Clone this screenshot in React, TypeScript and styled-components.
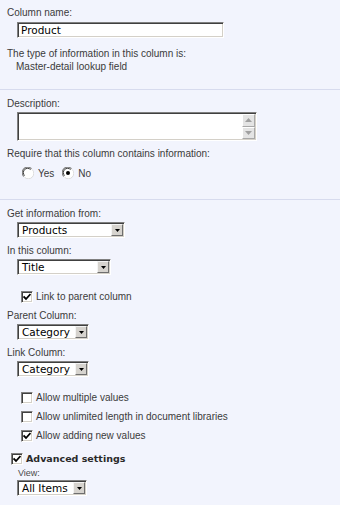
import React from "react";
import styled, { createGlobalStyle } from "styled-components";

const GlobalStyle = createGlobalStyle`
  html, body {
    margin: 0;
    padding: 0;
    background: #f2f4fd;
  }
  body {
    font-family: "Liberation Sans", Arial, sans-serif;
    font-size: 10px;
    color: #3b3b3b;
  }
`;

const SPage = styled.div`
  width: 340px;
  height: 505px;
  background: #f2f4fd;
  overflow: hidden;
`;

const SSection = styled.div<{ top: number; bottom: number; last?: boolean }>`
  display: flex;
  flex-direction: column;
  align-items: flex-start;
  padding: ${({ top, bottom }) => `${top}px 0 ${bottom}px 7px`};
  border-bottom: ${({ last }) => (last ? "none" : "1px solid #d7dbee")};
`;

const SLabel = styled.div<{ gap?: number; indent?: number }>`
  line-height: 13px;
  margin-top: ${({ gap }) => gap ?? 0}px;
  margin-left: ${({ indent }) => indent ?? 0}px;
  white-space: nowrap;
`;

const SSmallLabel = styled.div<{ gap?: number }>`
  font-size: 9px;
  line-height: 11px;
  margin-top: ${({ gap }) => gap ?? 0}px;
  margin-left: 11px;
  color: #4a4a4a;
`;

// classic windows sunken frame
const insetBorder = `
  border-style: solid;
  border-width: 1px;
  border-color: #808080 #ffffff #ffffff #808080;
  box-shadow: inset 1px 1px 0 #404040, inset -1px -1px 0 #d4d0c8;
  background: #ffffff;
  box-sizing: border-box;
`;

const SField = styled.div<{ width: number; gap?: number }>`
  ${insetBorder}
  width: ${({ width }) => width}px;
  height: 16px;
  margin-top: ${({ gap }) => gap ?? 2}px;
  margin-left: 10px;
  display: flex;
  align-items: center;
  font-family: "DejaVu Sans", Verdana, sans-serif;
  font-size: 10.5px;
  color: #000;
  padding-left: 3px;
`;

const STextArea = styled.div<{ width: number }>`
  ${insetBorder}
  width: ${({ width }) => width}px;
  height: 29px;
  margin-top: 2px;
  margin-left: 10px;
  padding: 1px;
  display: flex;
  justify-content: flex-end;
`;

const SScrollColumn = styled.div`
  display: flex;
  flex-direction: column;
  width: 13px;
`;

const SScrollButton = styled.div`
  flex: 1;
  display: flex;
  align-items: center;
  justify-content: center;
  background: #e4e4e4;
  border-style: solid;
  border-width: 1px;
  border-color: #ffffff #a8a8a8 #a8a8a8 #ffffff;
`;

const SSelect = styled.div<{ width: number; gap?: number }>`
  ${insetBorder}
  width: ${({ width }) => width}px;
  height: 16px;
  margin-top: ${({ gap }) => gap ?? 2}px;
  margin-left: 10px;
  padding: 1px;
  display: flex;
  align-items: stretch;
  font-family: "DejaVu Sans", Verdana, sans-serif;
  font-size: 10.5px;
  color: #000;
`;

const SSelectText = styled.div`
  flex: 1;
  display: flex;
  align-items: center;
  padding-left: 3px;
  white-space: nowrap;
  overflow: hidden;
`;

const SDropButton = styled.div`
  width: 12px;
  display: flex;
  align-items: center;
  justify-content: center;
  background: #d6d3ce;
  border-style: solid;
  border-width: 1px;
  border-color: #f4f4f4 #6e6e6e #6e6e6e #f4f4f4;
  box-sizing: border-box;
`;

const SCheckRow = styled.div<{ gap?: number; indent?: number }>`
  display: flex;
  align-items: center;
  gap: 3px;
  height: 13px;
  margin-top: ${({ gap }) => gap ?? 0}px;
  margin-left: ${({ indent }) => indent ?? 14}px;
  white-space: nowrap;
`;

const SBox = styled.div`
  ${insetBorder}
  width: 12px;
  height: 12px;
  display: flex;
  align-items: center;
  justify-content: center;
`;

const SBold = styled.span`
  font-family: "DejaVu Sans", Verdana, sans-serif;
  font-weight: bold;
  font-size: 9.5px;
  color: #2a2a2a;
`;

const SRadioRow = styled.div`
  display: flex;
  align-items: center;
  height: 14px;
  margin-top: 6px;
  margin-left: 15px;
`;

const SRadioItem = styled.div<{ gap?: number }>`
  display: flex;
  align-items: center;
  gap: 4px;
  margin-left: ${({ gap }) => gap ?? 0}px;
`;

const Check: React.FC<{ checked?: boolean }> = ({ checked }) => (
  <SBox>
    {checked && (
      <svg width="8" height="8" viewBox="0 0 8 8">
        <path d="M0.5 3.5 L3 6 L7.5 1" stroke="#000" strokeWidth="1.8" fill="none" />
      </svg>
    )}
  </SBox>
);

const Radio: React.FC<{ checked?: boolean }> = ({ checked }) => (
  <svg width="12" height="12" viewBox="0 0 12 12">
    <circle cx="6" cy="6" r="5.5" fill="#ffffff" />
    <path d="M1.8 9.5 A5 5 0 0 1 9.5 1.8" stroke="#808080" strokeWidth="1.2" fill="none" />
    <path d="M2.6 8.6 A4 4 0 0 1 8.6 2.6" stroke="#404040" strokeWidth="1" fill="none" />
    <path d="M10.2 2.5 A5 5 0 0 1 2.5 10.2" stroke="#dcdcdc" strokeWidth="1" fill="none" />
    {checked && <circle cx="6" cy="6" r="2" fill="#000" />}
  </svg>
);

const Arrow: React.FC<{ up?: boolean; color?: string }> = ({ up, color = "#000" }) => (
  <svg width="7" height="4" viewBox="0 0 7 4">
    <path d={up ? "M0 4 L3.5 0 L7 4 Z" : "M0 0 L7 0 L3.5 4 Z"} fill={color} />
  </svg>
);

const Select: React.FC<{ value: string; width: number; gap?: number }> = ({ value, width, gap }) => (
  <SSelect width={width} gap={gap}>
    <SSelectText>{value}</SSelectText>
    <SDropButton>
      <svg width="5" height="3" viewBox="0 0 5 3">
        <path d="M0 0 L5 0 L2.5 3 Z" fill="#000" />
      </svg>
    </SDropButton>
  </SSelect>
);

const App: React.FC = () => {
  return (
    <SPage>
      <GlobalStyle />
      <SSection top={6} bottom={16}>
        <SLabel>Column name:</SLabel>
        <SField width={207} gap={3}>Product</SField>
        <SLabel gap={9}>The type of information in this column is:</SLabel>
        <SLabel indent={9}>Master-detail lookup field</SLabel>
      </SSection>

      <SSection top={7} bottom={19}>
        <SLabel>Description:</SLabel>
        <STextArea width={240}>
          <SScrollColumn>
            <SScrollButton>
              <Arrow up color="#a0a0a0" />
            </SScrollButton>
            <SScrollButton>
              <Arrow color="#a0a0a0" />
            </SScrollButton>
          </SScrollColumn>
        </STextArea>
        <SLabel gap={6}>Require that this column contains information:</SLabel>
        <SRadioRow>
          <SRadioItem>
            <Radio />
            Yes
          </SRadioItem>
          <SRadioItem gap={8}>
            <Radio checked />
            No
          </SRadioItem>
        </SRadioRow>
      </SSection>

      <SSection top={7} bottom={10} last>
        <SLabel>Get information from:</SLabel>
        <Select value="Products" width={108} />
        <SLabel gap={6}>In this column:</SLabel>
        <Select value="Title" width={94} />
        <SCheckRow gap={15}>
          <Check checked />
          Link to parent column
        </SCheckRow>
        <SLabel gap={6}>Parent Column:</SLabel>
        <Select value="Category" width={72} />
        <SLabel gap={6}>Link Column:</SLabel>
        <Select value="Category" width={72} />
        <SCheckRow gap={14}>
          <Check />
          Allow multiple values
        </SCheckRow>
        <SCheckRow gap={6}>
          <Check />
          Allow unlimited length in document libraries
        </SCheckRow>
        <SCheckRow gap={6}>
          <Check checked />
          Allow adding new values
        </SCheckRow>
        <SCheckRow gap={10} indent={4}>
          <Check checked />
          <SBold>Advanced settings</SBold>
        </SCheckRow>
        <SSmallLabel gap={3}>View:</SSmallLabel>
        <Select value="All Items" width={70} gap={1} />
      </SSection>
    </SPage>
  );
};

export default App;
